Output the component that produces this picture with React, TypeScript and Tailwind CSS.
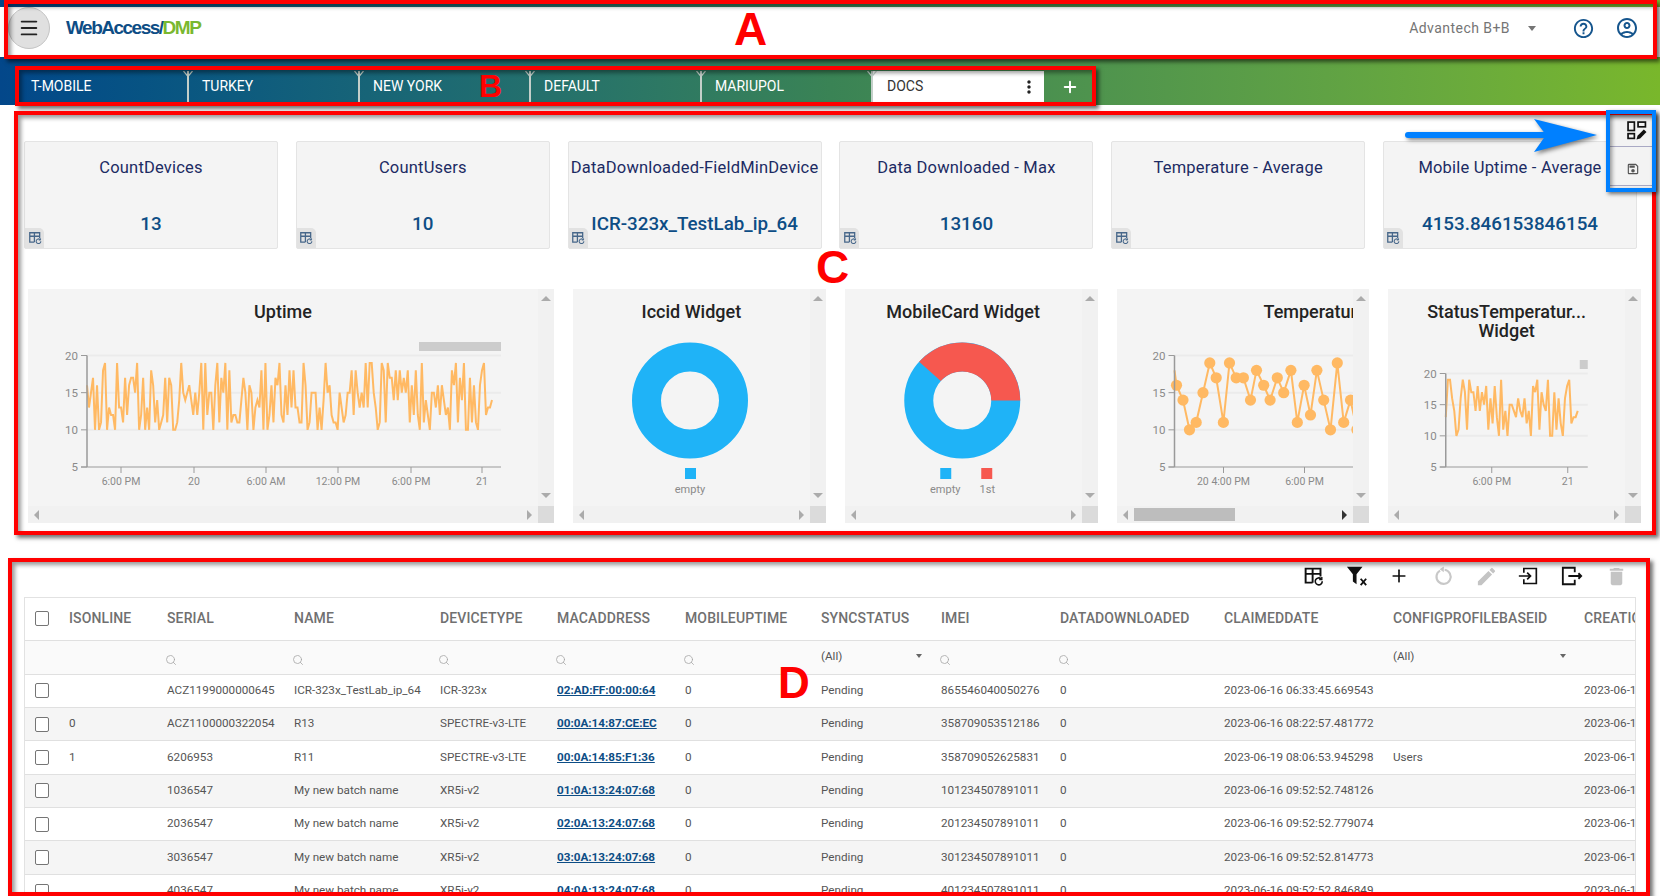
import { Menu, Plus, Search } from "lucide-react"
import { MdDelete, MdEdit, MdHelpOutline, MdMoreVert, MdOutlineAccountCircle, MdOutlineSave } from "react-icons/md"

const tabs = ["T-MOBILE", "TURKEY", "NEW YORK", "DEFAULT", "MARIUPOL"]

const kpis = [
  { title: "CountDevices", value: "13" },
  { title: "CountUsers", value: "10" },
  { title: "DataDownloaded-FieldMinDevice", value: "ICR-323x_TestLab_ip_64" },
  { title: "Data Downloaded - Max", value: "13160" },
  { title: "Temperature - Average", value: "" },
  { title: "Mobile Uptime - Average", value: "4153.846153846154" },
]

const uptime = [
  16, 13, 15, 17, 10, 16, 10, 11, 18, 19, 10, 13, 12, 12, 10, 19, 13, 13, 11, 17, 12, 16, 17, 17, 15, 19, 10, 12, 17, 10,
  13, 10, 18, 16, 11, 14, 10, 11, 12, 17, 11, 17, 16, 10, 10, 11, 14, 19, 15, 14, 15, 16, 14, 12, 15, 12, 15, 19, 10, 19,
  12, 15, 15, 10, 16, 19, 11, 17, 15, 19, 10, 18, 11, 12, 12, 11, 11, 14, 17, 15, 10, 16, 15, 10, 13, 14, 13, 18, 10, 19,
  10, 12, 16, 11, 17, 16, 19, 12, 11, 16, 12, 18, 13, 18, 13, 13, 11, 11, 19, 16, 10, 11, 15, 15, 15, 10, 13, 10, 14, 19,
  15, 16, 12, 11, 11, 10, 15, 13, 11, 12, 15, 15, 18, 12, 18, 15, 13, 15, 13, 19, 13, 19, 19, 15, 13, 10, 11, 19, 18, 11,
  19, 17, 17, 14, 18, 14, 18, 15, 17, 15, 18, 11, 16, 12, 18, 12, 10, 19, 11, 14, 12, 10, 15, 15, 13, 16, 12, 16, 14, 12,
  13, 10, 18, 16, 19, 11, 17, 14, 19, 10, 10, 17, 11, 16, 11, 10, 16, 18, 19, 12, 13, 13, 14,
]

const statusSeries = [
  13, 19, 19, 16, 14, 10, 11, 16, 19, 17, 11, 19, 17, 17, 14, 18, 14, 17, 15, 18, 11, 16, 12, 18, 13, 10, 19, 11, 14, 10,
  15, 15, 14, 13, 16, 14, 13, 16, 12, 14, 10, 18, 17, 19, 11, 17, 15, 14, 19, 10, 10, 17, 11, 16, 12, 10, 16, 18, 19, 12,
  13, 13, 14,
]

const tempPoints = [
  [1174, 18], [1176, 16], [1182.5, 14], [1189, 10], [1195.7, 11], [1202.5, 15], [1209.3, 19], [1215.7, 17], [1222.9, 11],
  [1229, 19], [1235.7, 17], [1242.9, 17], [1250, 14], [1256, 18], [1263.2, 16], [1269.6, 14], [1276.8, 17], [1283.2, 15],
  [1290.4, 18], [1296.8, 11], [1303.6, 16], [1310, 12], [1316.4, 18], [1323.2, 14], [1330, 10], [1336.8, 19], [1343.2, 11],
  [1350, 14], [1356.4, 10],
]

const columns = [
  { name: "", w: "w-[36px]" },
  { name: "ISONLINE", w: "w-[98px]" },
  { name: "SERIAL", w: "w-[127px]" },
  { name: "NAME", w: "w-[146px]" },
  { name: "DEVICETYPE", w: "w-[117px]" },
  { name: "MACADDRESS", w: "w-[128px]" },
  { name: "MOBILEUPTIME", w: "w-[136px]" },
  { name: "SYNCSTATUS", w: "w-[120px]" },
  { name: "IMEI", w: "w-[119px]" },
  { name: "DATADOWNLOADED", w: "w-[164px]" },
  { name: "CLAIMEDDATE", w: "w-[169px]" },
  { name: "CONFIGPROFILEBASEID", w: "w-[191px]" },
  { name: "CREATIONDATE", w: "w-[300px]" },
]

const rows = [
  ["", "ACZ1199000000645", "ICR-323x_TestLab_ip_64", "ICR-323x", "02:AD:FF:00:00:64", "865546040050276", "2023-06-16 06:33:45.669543", ""],
  ["0", "ACZ1100000322054", "R13", "SPECTRE-v3-LTE", "00:0A:14:87:CE:EC", "358709053512186", "2023-06-16 08:22:57.481772", ""],
  ["1", "6206953", "R11", "SPECTRE-v3-LTE", "00:0A:14:85:F1:36", "358709052625831", "2023-06-19 08:06:53.945298", "Users"],
  ["", "1036547", "My new batch name", "XR5i-v2", "01:0A:13:24:07:68", "101234507891011", "2023-06-16 09:52:52.748126", ""],
  ["", "2036547", "My new batch name", "XR5i-v2", "02:0A:13:24:07:68", "201234507891011", "2023-06-16 09:52:52.779074", ""],
  ["", "3036547", "My new batch name", "XR5i-v2", "03:0A:13:24:07:68", "301234507891011", "2023-06-16 09:52:52.814773", ""],
  ["", "4036547", "My new batch name", "XR5i-v2", "04:0A:13:24:07:68", "401234507891011", "2023-06-16 09:52:52.846849", ""],
]

function TableRefreshIcon({ size, color }: { size: number; color: string }) {
  return (
    <svg width={size} height={size} viewBox="0 0 24 24" fill="none" stroke={color} strokeWidth="2.2">
      <path d="M11 19H3V3h17v9M3 9h17M11 3v16" />
      <path d="M22 17.5a4 4 0 1 1-1.3-2.9" strokeWidth="1.8" />
      <path d="M21.5 12.5v3h-3" strokeWidth="1.6" />
    </svg>
  )
}

function Checkbox() {
  return <div className="w-[14px] h-[15px] ml-[10px] border border-[#757575] rounded-[2px] bg-white" />
}

function Kpi({ title, value }: { title: string; value: string }) {
  return (
    <div className="relative w-[254px] h-[108px] bg-[#f4f4f4] border border-[#e4e4e4] rounded-[2px] flex flex-col items-center">
      <div className="mt-[16px] h-5 text-[16.5px] leading-5 tracking-[0.2px] text-[#1c2b63] whitespace-nowrap">{title}</div>
      <div className="mt-[34px] text-[18.8px] leading-6 font-medium text-[#0d4d85] whitespace-nowrap">{value}</div>
      <div className="absolute left-0 bottom-0 w-[19px] h-[20px] bg-[#e2e2e2] rounded-tr-[5px] flex items-center justify-center">
        <TableRefreshIcon size={14} color="#47678a" />
      </div>
    </div>
  )
}

function ChartCard({ wide, thumb, children }: { wide?: boolean; thumb?: boolean; children: React.ReactNode }) {
  return (
    <div className={`flex flex-col h-[234px] bg-[#f4f4f4] ${wide ? "w-[526px]" : "w-[252.75px]"}`}>
      <div className="flex h-[217px]">
        <div className="flex-1 min-w-0 overflow-hidden">{children}</div>
        <div className="w-[16px] bg-[#f1f1f1] flex flex-col items-center justify-between pt-[7px] pb-[8px]">
          <div className="w-0 h-0 border-x-[5px] border-x-transparent border-b-[5px] border-b-[#ababab]" />
          <div className="w-0 h-0 border-x-[5px] border-x-transparent border-t-[5px] border-t-[#ababab]" />
        </div>
      </div>
      <div className="flex h-[17px]">
        <div className="relative flex-1 bg-[#f1f1f1] flex items-center justify-between pl-[6px] pr-[6px]">
          <div className="w-0 h-0 border-y-[5px] border-y-transparent border-r-[5px] border-r-[#ababab]" />
          {thumb && <div className="absolute left-[17px] top-[2px] w-[101px] h-[13px] bg-[#bdbdbd]" />}
          <div className={`w-0 h-0 border-y-[5px] border-y-transparent border-l-[5px] ${thumb ? "border-l-[#333]" : "border-l-[#ababab]"}`} />
        </div>
        <div className="w-[16px] bg-[#dbdbdb]" />
      </div>
    </div>
  )
}

type LineChartProps = {
  box: [number, number, number, number]
  x0: number
  x1: number
  y20: number
  y5: number
  ticks: [number, string][]
  bar: [number, number, number, number]
  line?: number[]
  lineEnd?: number
  points?: number[][]
}

function LineChart({ box, x0, x1, y20, y5, ticks, bar, line, lineEnd, points }: LineChartProps) {
  const yOf = (v: number) => y5 - ((v - 5) / 15) * (y5 - y20)
  const pts = points
    ? points.map((p) => [p[0], yOf(p[1])])
    : (line || []).map((v, i, a) => [x0 + (i * ((lineEnd || x1) - x0)) / (a.length - 1), yOf(v)])
  return (
    <svg width={box[2]} height={box[3]} viewBox={box.join(" ")} className="block [font-family:Roboto,sans-serif]">
      <rect x={bar[0]} y={bar[1]} width={bar[2]} height={bar[3]} fill="#cccccc" />
      {[20, 15, 10].map((v) => (
        <line key={v} x1={x0} x2={x1} y1={yOf(v)} y2={yOf(v)} stroke="#ebebeb" strokeWidth="2" />
      ))}
      <polyline points={pts.map((p) => p.join(",")).join(" ")} fill="none" stroke="#ffb963" strokeWidth="2" />
      {points && pts.slice(1).map((p) => <circle key={p[0]} cx={p[0]} cy={p[1]} r="5.6" fill="#ffb963" />)}
      <line x1={x0} x2={x0} y1={y20} y2={y5} stroke="#9a9a9a" strokeWidth="1.5" />
      <line x1={x0 - 6} x2={x1} y1={y5} y2={y5} stroke="#9a9a9a" strokeWidth="1" />
      {[20, 15, 10, 5].map((v) => (
        <g key={v}>
          <line x1={x0 - 6} x2={x0} y1={yOf(v)} y2={yOf(v)} stroke="#9a9a9a" />
          <text x={x0 - 9} y={yOf(v) + 4} textAnchor="end" fontSize="11.5" fill="#8a8a8a">
            {v}
          </text>
        </g>
      ))}
      {ticks.map(([x, label]) => (
        <g key={x}>
          <line x1={x} x2={x} y1={y5} y2={y5 + 6} stroke="#9a9a9a" />
          <text x={x} y={y5 + 18} textAnchor="middle" fontSize="10.5" fill="#8a8a8a">
            {label}
          </text>
        </g>
      ))}
    </svg>
  )
}

function DonutLegend({ items }: { items: { x: number; label: string; color: string; lx: number }[] }) {
  return (
    <>
      {items.map((it) => (
        <g key={it.label}>
          <rect x={it.x} y="468" width="11" height="11" fill={it.color} />
          <text x={it.lx} y="493" textAnchor="middle" fontSize="11" fill="#8a8a8a">
            {it.label}
          </text>
        </g>
      ))}
    </>
  )
}

function Title({ children }: { children: React.ReactNode }) {
  return <div className="h-[41px] pt-[13px] text-center text-[18px] leading-5 font-medium text-[#232323] whitespace-nowrap">{children}</div>
}

function Toolbar() {
  return (
    <div className="flex justify-end items-center mt-[42px] mb-[10px] h-[22px] pr-[32px]">
      <div className="w-[24px] flex justify-center mr-[20px]">
        <TableRefreshIcon size={21} color="#111" />
      </div>
      <div className="w-[24px] flex justify-center mr-[18px]">
        <svg width="22" height="22" viewBox="0 0 24 24">
          <path d="M1 2h17l-6.5 8v11l-4-3v-8z" fill="#111" />
          <path d="M16 15l6 7M22 15l-6 7" stroke="#111" strokeWidth="2" fill="none" />
        </svg>
      </div>
      <div className="w-[24px] flex justify-center mr-[20px]">
        <Plus size={20} color="#111" strokeWidth={2} />
      </div>
      <div className="w-[24px] flex justify-center mr-[19px]">
        <svg width="20" height="20" viewBox="0 0 24 24" fill="none" stroke="#c8c8c8" strokeWidth="2.6">
          <path d="M8.5 5.5a8.5 8.5 0 1 0 5.5-1" />
          <path d="M13 0.5v7l-5-3.5z" fill="#c8c8c8" stroke="none" />
        </svg>
      </div>
      <div className="w-[24px] flex justify-center mr-[18px]">
        <MdEdit size={23} color="#c4c4c4" />
      </div>
      <div className="w-[24px] flex justify-center mr-[20px]">
        <svg width="20" height="20" viewBox="0 0 24 24" fill="none" stroke="#111" strokeWidth="2">
          <path d="M7 8V3h15v18H7v-5M1 12h13M11 8l4 4-4 4" />
        </svg>
      </div>
      <div className="w-[24px] flex justify-center mr-[20px]">
        <svg width="22" height="22" viewBox="0 0 24 24" fill="none" stroke="#111" strokeWidth="2">
          <path d="M15 8V3H2v18h13v-5M8 12h14M19 9l3 3-3 3" />
        </svg>
      </div>
      <div className="w-[24px] flex justify-center">
        <MdDelete size={23} color="#c4c4c4" />
      </div>
    </div>
  )
}

function SearchCell() {
  return <Search size={12} color="#a6a6a6" strokeWidth={1.6} className="mt-[6px] -ml-[2px]" />
}

function SelectCell({ pad }: { pad: string }) {
  return (
    <th className={`pl-2 font-normal ${pad}`}>
      <div className="flex items-center justify-between -mt-[1px]">
        <span>(All)</span>
        <div className="w-0 h-0 border-x-[3.5px] border-x-transparent border-t-[4px] border-t-[#666]" />
      </div>
    </th>
  )
}

function DeviceTable() {
  return (
    <div className="ml-[24px] w-[1612px] overflow-hidden border-t border-x border-[#e2e2e2]">
      <table className="table-fixed w-[1752px] border-collapse text-[11.7px] text-[#555] [font-family:Roboto,sans-serif]">
        <colgroup>
          {columns.map((c) => (
            <col key={c.name} className={c.w} />
          ))}
        </colgroup>
        <thead>
          <tr className="h-[42px] border-b border-[#e0e0e0]">
            <th>
              <Checkbox />
            </th>
            {columns.slice(1).map((c) => (
              <th key={c.name} className="pl-2 text-left text-[14px] tracking-[0.12px] font-medium text-[#707070] whitespace-nowrap">
                {c.name}
              </th>
            ))}
          </tr>
          <tr className="h-[34px] border-b border-[#e0e0e0] bg-[#fafafa] font-normal">
            <th />
            <th />
            {[0, 1, 2, 3, 4].map((i) => (
              <th key={i} className="pl-2 font-normal">
                <SearchCell />
              </th>
            ))}
            <SelectCell pad="pr-[11px]" />
            <th className="pl-2 font-normal">
              <SearchCell />
            </th>
            <th className="pl-2 font-normal">
              <SearchCell />
            </th>
            <th />
            <SelectCell pad="pr-[10px]" />
            <th />
          </tr>
        </thead>
        <tbody>
          {rows.map((r, i) => (
            <tr key={r[1]} className={`h-[33.4px] border-b border-[#e0e0e0] ${i % 2 === 1 ? "bg-[#f5f5f5]" : "bg-white"}`}>
              <td>
                <Checkbox />
              </td>
              <td className="pl-2">{r[0]}</td>
              <td className="pl-2 whitespace-nowrap">{r[1]}</td>
              <td className="pl-2 whitespace-nowrap">{r[2]}</td>
              <td className="pl-2 whitespace-nowrap">{r[3]}</td>
              <td className="pl-2 whitespace-nowrap font-bold text-[#0d4d85] underline">{r[4]}</td>
              <td className="pl-2">0</td>
              <td className="pl-2">Pending</td>
              <td className="pl-2 whitespace-nowrap">{r[5]}</td>
              <td className="pl-2">0</td>
              <td className="pl-2 whitespace-nowrap">{r[6]}</td>
              <td className="pl-2">{r[7]}</td>
              <td className="pl-2 whitespace-nowrap">{r[6]}</td>
            </tr>
          ))}
        </tbody>
      </table>
    </div>
  )
}

export default function App() {
  return (
    <div className="relative w-[1660px] h-[896px] overflow-hidden bg-white [font-family:Roboto,sans-serif]">
      {/* header + tabs sit on the gradient */}
      <div className="h-[105px] pt-[7px] bg-gradient-to-r from-[#03478a] via-[#3a8355] to-[#79b72b]">
        <header className="h-[50px] bg-white flex items-center pl-[8px] pr-[21px] pb-[8px]">
          <button className="w-[42px] h-[42px] rounded-full bg-[#e0e0e0] border border-[#c4c4c4] flex items-center justify-center">
            <Menu size={22} color="#222" strokeWidth={2} />
          </button>
          <div className="ml-[16px] text-[19px] font-bold tracking-[-1.5px] [font-family:'Liberation_Sans',sans-serif]">
            <span className="text-[#0d4d85]">WebAccess/</span>
            <span className="text-[#7ab82f]">DMP</span>
          </div>
          <div className="flex-1" />
          <span className="text-[14px] tracking-[0.45px] text-[#757575]">Advantech B+B</span>
          <div className="ml-[18px] w-0 h-0 border-x-[4.5px] border-x-transparent border-t-[5px] border-t-[#757575]" />
          <MdHelpOutline size={23} color="#15558d" className="ml-[36px]" />
          <MdOutlineAccountCircle size={24} color="#15558d" className="ml-[20px]" />
        </header>
        <nav className="flex items-center mt-[14px] ml-[18px] h-[31px]">
          {tabs.map((t) => (
            <div key={t} className="relative w-[171px] h-full flex items-center pl-[13px] border-r-2 border-[#c3cfc9] text-[14px] text-white">
              {t}
              <svg width="10" height="6" viewBox="0 0 10 6" className="absolute -right-[6px] top-0">
                <path d="M0.5 0L5 5.5L9.5 0" fill="none" stroke="#c3cfc9" strokeWidth="1.2" />
              </svg>
            </div>
          ))}
          <div className="w-[171px] h-full bg-white flex items-center justify-between pl-[14px] pr-[5px] text-[14px] text-[#333]">
            DOCS
            <MdMoreVert size={20} color="#222" />
          </div>
          <Plus size={18} color="#fff" strokeWidth={2.6} className="ml-[17px]" />
        </nav>
      </div>

      {/* dashboard widgets */}
      <section className="pt-[36px]">
        <div className="flex gap-[17.8px] ml-[24px]">
          {kpis.map((k) => (
            <Kpi key={k.title} title={k.title} value={k.value} />
          ))}
        </div>
        <div className="flex gap-[19px] ml-[28px] mt-[40px]">
          <ChartCard wide>
            <Title>Uptime</Title>
            <LineChart
              box={[28, 330, 510, 176]}
              x0={87}
              x1={501}
              y20={355.5}
              y5={467}
              ticks={[[121, "6:00 PM"], [194, "20"], [266, "6:00 AM"], [338, "12:00 PM"], [411, "6:00 PM"], [482, "21"]]}
              bar={[419, 342, 82, 9]}
              line={uptime}
              lineEnd={492}
            />
          </ChartCard>
          <ChartCard>
            <Title>Iccid Widget</Title>
            <svg width="237" height="176" viewBox="573 330 237 176" className="block">
              <circle cx="690" cy="400.5" r="43.5" fill="none" stroke="#1fb3f7" strokeWidth="29" />
              <DonutLegend items={[{ x: 685, label: "empty", color: "#1fb3f7", lx: 690 }]} />
            </svg>
          </ChartCard>
          <ChartCard>
            <Title>MobileCard Widget</Title>
            <svg width="237" height="176" viewBox="844.75 330 237 176" className="block">
              <circle cx="962" cy="400.5" r="43.5" fill="none" stroke="#1fb3f7" strokeWidth="29" />
              <path d="M1020 400.5A58 58 0 0 0 918.9 361.7L940.5 381.1A29 29 0 0 1 991 400.5Z" fill="#f6584f" />
              <DonutLegend
                items={[
                  { x: 940, label: "empty", color: "#1fb3f7", lx: 945 },
                  { x: 981, label: "1st", color: "#f6584f", lx: 987 },
                ]}
              />
            </svg>
          </ChartCard>
          <ChartCard thumb>
            <div className="h-[41px] pt-[13px] pl-[147px] text-[18px] leading-5 font-medium text-[#232323] whitespace-nowrap overflow-hidden">
              Temperature Widget
            </div>
            <LineChart
              box={[1116.5, 330, 237, 176]}
              x0={1174}
              x1={1354}
              y20={355.5}
              y5={467}
              ticks={[[1223, "20 4:00 PM"], [1304, "6:00 PM"]]}
              bar={[0, 0, 0, 0]}
              points={tempPoints}
            />
          </ChartCard>
          <ChartCard>
            <div className="h-[56px] pt-[13px] text-center text-[18px] leading-[19px] font-medium text-[#232323]">
              StatusTemperatur...
              <br />
              Widget
            </div>
            <LineChart
              box={[1388.25, 345, 237, 161]}
              x0={1446}
              x1={1588}
              y20={373.5}
              y5={467}
              ticks={[[1492, "6:00 PM"], [1568, "21"]]}
              bar={[1580, 360, 8, 9]}
              line={statusSeries}
              lineEnd={1578}
            />
          </ChartCard>
        </div>
      </section>

      <section>
        <Toolbar />
        <DeviceTable />
      </section>

      {/* edit/save buttons over the last card */}
      <div className="absolute left-[1610px] top-[114px] w-[42px] h-[74px] bg-[#f3f3f3] flex flex-col">
        <div className="h-[33px] border-b border-[#a9a9c4] flex items-center pl-[17px]">
          <svg width="20" height="19" viewBox="0 0 19 18" fill="none" stroke="#111" strokeWidth="1.6">
            <rect x="1" y="1" width="6" height="8" />
            <rect x="10.5" y="1" width="7" height="4.5" />
            <rect x="1" y="12" width="6" height="4.5" />
            <path d="M9 17.5l1-3.5 6-6 2.5 2.5-6 6z" fill="#111" stroke="none" />
          </svg>
        </div>
        <div className="h-[39px] border-b border-[#a9a9c4] flex items-center pl-[16px] pt-[5px]">
          <MdOutlineSave size={14} color="#555" />
        </div>
      </div>

      {/* annotations on the screenshot */}
      <div className="absolute left-[4px] top-0 w-[1653px] h-[59px] border-[4px] border-[#ff0000] shadow-[3px_3px_4px_rgba(0,0,0,0.55),inset_3px_3px_4px_rgba(0,0,0,0.4)]" />
      <div className="absolute left-[15px] top-[66px] w-[1081px] h-[40px] border-[4px] border-[#ff0000] shadow-[3px_3px_4px_rgba(0,0,0,0.55),inset_3px_3px_4px_rgba(0,0,0,0.4)]" />
      <div className="absolute left-[14px] top-[111px] w-[1642px] h-[424px] border-[4px] border-[#ff0000] shadow-[3px_3px_4px_rgba(0,0,0,0.55),inset_3px_3px_4px_rgba(0,0,0,0.4)]" />
      <div className="absolute left-[8px] top-[558px] w-[1642px] h-[338px] border-[4px] border-[#ff0000] shadow-[3px_3px_4px_rgba(0,0,0,0.55),inset_3px_3px_4px_rgba(0,0,0,0.4)]" />
      <div className="absolute left-[1606px] top-[110px] w-[50px] h-[82px] border-[4px] border-[#0080ff] shadow-[2px_2px_4px_rgba(0,0,0,0.55),inset_2px_2px_4px_rgba(0,0,0,0.4)]" />
      <svg width="200" height="40" viewBox="1400 116 200 40" className="absolute left-[1400px] top-[116px] drop-shadow-[2px_2px_2px_rgba(0,0,0,0.5)]">
        <path d="M1408 135H1546" stroke="#0080ff" strokeWidth="6" strokeLinecap="round" />
        <path d="M1534 119L1597 135L1534 152L1546 135Z" fill="#0080ff" />
      </svg>
      <span className="absolute left-[734px] top-[3px] text-[46px] leading-[52px] font-bold text-[#ff0000] [font-family:'Liberation_Sans',sans-serif]">A</span>
      <span className="absolute left-[479px] top-[67px] text-[32px] leading-[38px] font-bold text-[#ff0000] [font-family:'Liberation_Sans',sans-serif]">B</span>
      <span className="absolute left-[816px] top-[241px] text-[46px] leading-[52px] font-bold text-[#ff0000] [font-family:'Liberation_Sans',sans-serif]">C</span>
      <span className="absolute left-[778px] top-[658px] text-[44px] leading-[50px] font-bold text-[#ff0000] [font-family:'Liberation_Sans',sans-serif]">D</span>
    </div>
  )
}
